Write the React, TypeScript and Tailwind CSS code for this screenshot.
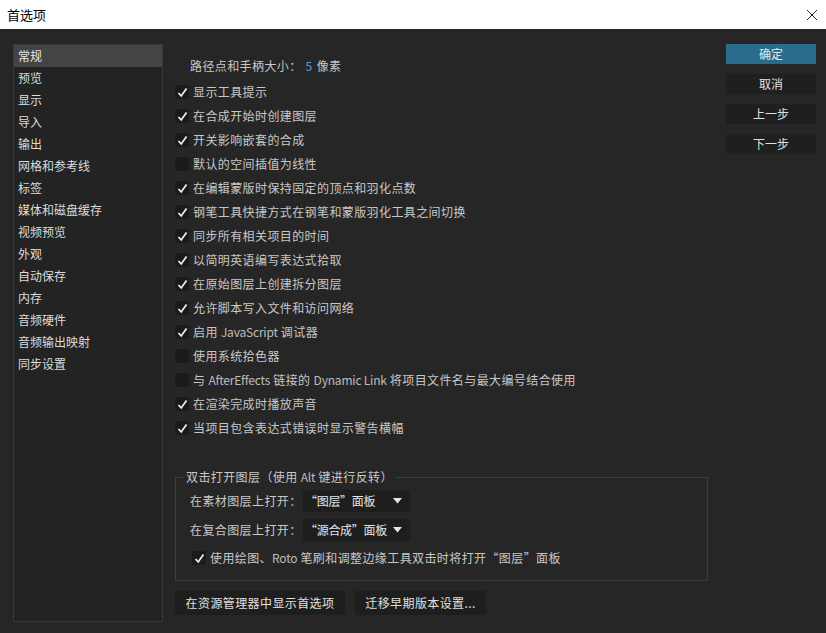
import React from "react";

const font = { fontFamily: '"Noto Sans CJK SC", "Noto Sans", sans-serif' };

const navItems = [
  "常规",
  "预览",
  "显示",
  "导入",
  "输出",
  "网格和参考线",
  "标签",
  "媒体和磁盘缓存",
  "视频预览",
  "外观",
  "自动保存",
  "内存",
  "音频硬件",
  "音频输出映射",
  "同步设置",
];

const options: [string, boolean][] = [
  ["显示工具提示", true],
  ["在合成开始时创建图层", true],
  ["开关影响嵌套的合成", true],
  ["默认的空间插值为线性", false],
  ["在编辑蒙版时保持固定的顶点和羽化点数", true],
  ["钢笔工具快捷方式在钢笔和蒙版羽化工具之间切换", true],
  ["同步所有相关项目的时间", true],
  ["以简明英语编写表达式拾取", true],
  ["在原始图层上创建拆分图层", true],
  ["允许脚本写入文件和访问网络", true],
  ["启用 JavaScript 调试器", true],
  ["使用系统拾色器", false],
  ["与 AfterEffects 链接的 Dynamic Link 将项目文件名与最大编号结合使用", false],
  ["在渲染完成时播放声音", true],
  ["当项目包含表达式错误时显示警告横幅", true],
];

// latin runs are narrower in the original, so drop the letter spacing there
function Label({ text }: { text: string }) {
  const parts = text.split(/([A-Za-z][A-Za-z ]*[A-Za-z])/);
  return (
    <span>
      {parts.map((p, i) =>
        /[A-Za-z]/.test(p) ? (
          <span key={i} className="tracking-[-0.2px] text-[#bdbdbd]">
            {p}
          </span>
        ) : (
          <span key={i}>{p}</span>
        )
      )}
    </span>
  );
}

function Check({ on }: { on: boolean }) {
  return (
    <span className="flex h-[14px] w-[14px] shrink-0 items-center justify-center bg-[#1b1b1b]">
      {on && (
        <svg width="11" height="11" viewBox="0 0 11 11">
          <path d="M1.5 6 L4.2 9 L9.5 1.5" fill="none" stroke="#f2f2f2" strokeWidth="1.7" />
        </svg>
      )}
    </span>
  );
}

function Dropdown({ label }: { label: string }) {
  return (
    <div className="flex h-[22px] w-[107px] items-center justify-between bg-[#1e1e1e] pl-[2px] pr-[8px] tracking-[-0.3px] text-[#e6e6e6]">
      <span>{label}</span>
      <svg width="9" height="6" viewBox="0 0 9 6">
        <path d="M0 0 H9 L4.5 5.5 Z" fill="#e6e6e6" />
      </svg>
    </div>
  );
}

export default function App() {
  return (
    <div className="flex h-[633px] w-[826px] flex-col overflow-hidden bg-[#262626] text-[12px]" style={font}>
      <div className="flex h-[29px] shrink-0 items-center justify-between bg-white pl-[7px] pr-[8px] text-[13px] text-black">
        <span>首选项</span>
        <svg width="12" height="12" viewBox="0 0 12 12">
          <path d="M1 1 L11 11 M11 1 L1 11" stroke="#222" strokeWidth="1" />
        </svg>
      </div>

      <div className="flex flex-1">
        <div className="ml-[13px] mt-[15px] h-[578px] w-[150px] shrink-0 border border-[#383838] bg-[#232323]">
          {navItems.map((item, i) => (
            <div
              key={item}
              className={
                i === 0
                  ? "flex h-[22px] items-center bg-[#444444] pl-[4px] text-[#e8e8e8]"
                  : "flex h-[22px] items-center pl-[4px] text-[#dcdcdc]"
              }
            >
              {item}
            </div>
          ))}
        </div>

        <div className="ml-[12px] flex w-[533px] flex-col pt-[27px] tracking-[0.4px]">
          <div className="flex h-[20px] items-center pl-[15px] text-[#c8c8c8]">
            路径点和手柄大小：<span className="mx-[4px] text-[#4fa3d6]">5</span>像素
          </div>
          <div className="mt-[4px] flex flex-col">
            {options.map(([label, on]) => (
              <div key={label} className="flex h-[24px] items-center gap-[4px] text-[#c8c8c8]">
                <Check on={on} />
                <Label text={label} />
              </div>
            ))}
          </div>

          <fieldset className="mt-[28px] h-[113px] border border-[#3c3c3c] pl-[14px]">
            <legend className="ml-[-6px] px-[2px] text-[#c8c8c8]">
              <Label text="双击打开图层（使用 Alt 键进行反转）" />
            </legend>
            <div className="mt-[3px] flex h-[24px] items-center text-[#c8c8c8]">
              <span className="w-[113px]">在素材图层上打开：</span>
              <Dropdown label="“图层”面板" />
            </div>
            <div className="mt-[5px] flex h-[24px] items-center text-[#c8c8c8]">
              <span className="w-[113px]">在复合图层上打开：</span>
              <Dropdown label="“源合成”面板" />
            </div>
            <div className="mt-[4px] flex h-[24px] items-center gap-[4px] pl-[2px] text-[#c8c8c8]">
              <Check on />
              <Label text="使用绘图、Roto 笔刷和调整边缘工具双击时将打开“图层”面板" />
            </div>
          </fieldset>

          <div className="mt-[10px] flex gap-[10px]">
            <button className="h-[24px] w-[170px] bg-[#1e1e1e] text-[#e0e0e0]">在资源管理器中显示首选项</button>
            <button className="h-[24px] w-[131px] bg-[#1e1e1e] text-[#e0e0e0]">迁移早期版本设置...</button>
          </div>
        </div>

        <div className="ml-[18px] mt-[15px] flex w-[90px] flex-col gap-[10px]">
          <button className="h-[20px] bg-[#2b6c8c] text-[#e8e8e8]">确定</button>
          <button className="h-[20px] bg-[#1f1f1f] text-[#e0e0e0]">取消</button>
          <button className="h-[20px] bg-[#1f1f1f] text-[#e0e0e0]">上一步</button>
          <button className="h-[20px] bg-[#1f1f1f] text-[#e0e0e0]">下一步</button>
        </div>
      </div>
    </div>
  );
}
